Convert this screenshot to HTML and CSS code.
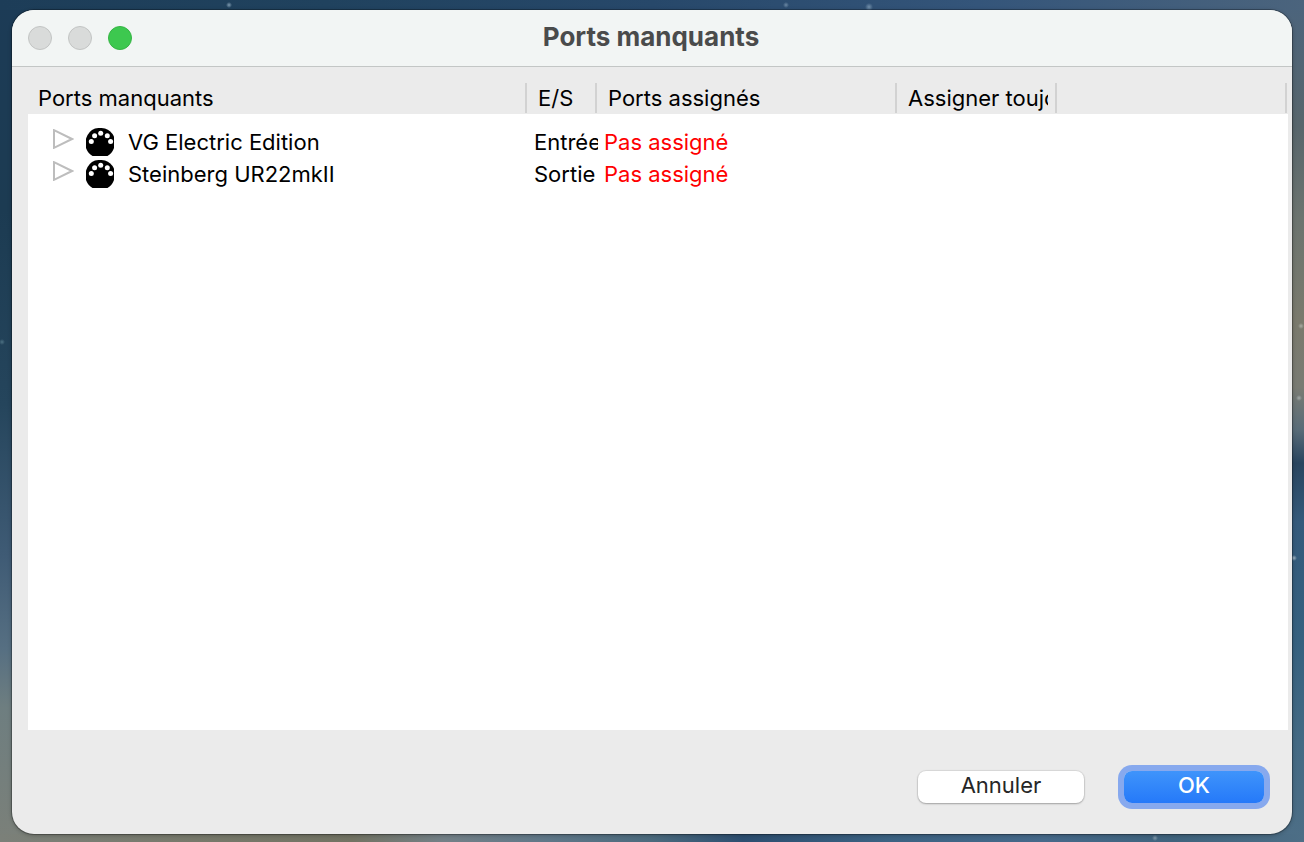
FILE: index.html
```
<!DOCTYPE html>
<html lang="fr">
<head>
<meta charset="utf-8">
<meta name="viewport" content="width=device-width, initial-scale=1">
<title>Ports manquants</title>
<link rel="stylesheet" href="styles.css">
</head>
<body class="desktop">
<svg class="defs" width="0" height="0" aria-hidden="true">
  <symbol id="arrow" viewBox="0 0 22 20">
    <path d="M2 1.2 L20 10 L2 18.8 Z" fill="none" stroke="#bdbdbd" stroke-width="2"/>
  </symbol>
  <symbol id="midi" viewBox="0 0 28 28">
    <path d="M9 0.5 Q14 -0.6 19 0.5 Q25 2.5 28 8.5 V20 Q26 25.500 21.5 28 H6.500 Q2 25.500 0 20 V10.500 Q2.500 3 9 0.500 Z" fill="#000"/>
    <g fill="#fff">
      <circle cx="5.300" cy="13.600" r="2.500"/>
      <circle cx="8.600" cy="7.800" r="2.500"/>
      <circle cx="14.700" cy="5.200" r="2.500"/>
      <circle cx="21.300" cy="7.800" r="2.500"/>
      <circle cx="24.600" cy="13.600" r="2.500"/>
    </g>
  </symbol>
</svg>
<main class="window">
  <header class="titlebar">
    <div class="lights">
      <button class="light" type="button" aria-label="Fermer" disabled></button>
      <button class="light" type="button" aria-label="Réduire" disabled></button>
      <button class="light zoom" type="button" aria-label="Agrandir"></button>
    </div>
    <h1 class="title">Ports manquants</h1>
  </header>
  <section class="list">
    <table class="ports">
      <colgroup>
        <col class="col-name"><col class="col-io"><col class="col-assigned"><col class="col-always"><col>
      </colgroup>
      <thead>
        <tr>
          <th scope="col"><div class="head">Ports manquants</div></th>
          <th scope="col"><div class="head">E/S</div></th>
          <th scope="col"><div class="head">Ports assignés</div></th>
          <th scope="col"><div class="head">Assigner toujours</div></th>
          <td><div class="head"></div></td>
        </tr>
      </thead>
      <tbody>
        <tr>
          <td><div class="port"><button class="toggle" type="button" aria-label="Développer VG Electric Edition"><svg class="arrow"><use href="#arrow"/></svg></button><svg class="midi"><use href="#midi"/></svg><span>VG Electric Edition</span></div></td>
          <td><div class="io">Entrée</div></td>
          <td class="missing">Pas assigné</td>
          <td></td><td></td>
        </tr>
        <tr>
          <td><div class="port"><button class="toggle" type="button" aria-label="Développer Steinberg UR22mkII"><svg class="arrow"><use href="#arrow"/></svg></button><svg class="midi"><use href="#midi"/></svg><span>Steinberg UR22mkII</span></div></td>
          <td><div class="io">Sortie</div></td>
          <td class="missing">Pas assigné</td>
          <td></td><td></td>
        </tr>
      </tbody>
    </table>
  </section>
  <footer class="actions">
    <button class="btn cancel" type="button">Annuler</button>
    <button class="btn ok" type="button">OK</button>
  </footer>
</main>
</body>
</html>
```
FILE: styles.css
```
* {
  box-sizing: border-box;
}

.desktop {
  margin: 0;
  min-height: 100vh;
  padding: 10px 12px 8px;
  display: flex;
  font-family: Inter, "Liberation Sans", sans-serif;
  font-size: 22px;
  line-height: 32px;
  color: #000;
  background:
    radial-gradient(circle at 229px 5px, #7f9bb0 0, transparent 3px),
    radial-gradient(circle at 786px 5px, #6b88a4 0, transparent 3px),
    radial-gradient(circle at 869px 7px, #7390ab 0, transparent 4px),
    radial-gradient(circle at 2px 342px, #4d7183 0, transparent 3px),
    radial-gradient(circle at 1301px 326px, #a9aca3 0, transparent 3px),
    radial-gradient(circle at 1299px 398px, #a3aaa8 0, transparent 3px),
    radial-gradient(circle at 1294px 558px, #9fb4c3 0, transparent 3px),
    radial-gradient(circle at 1155px 838px, #8299aa 0, transparent 3px),
    linear-gradient(90deg, #1d3d58, #20425e 25%, #27486a 50%, #34557a 75%, #4b647d) top / 100% 10px no-repeat,
    linear-gradient(90deg, #7b8079, #77796b 15%, #727363 27%, #738087 34%, #5f7788 42%, #4b6a7d 50%, #2c4e70 57%, #3b6282 68%, #46698a 80%, #3f637d 90%, #4d6e86) bottom / 100% 8px no-repeat,
    linear-gradient(#1c3b56, #1c3b52 25%, #25455c 48%, #3f5b75 66%, #566f82 77%, #6e7e80 84%, #7b8079) left / 50% 100% no-repeat,
    linear-gradient(#4b647d, #58666c 15%, #6c746f 26%, #7a7a6d 38%, #797b73 46%, #596c78 51%, #29455f 55%, #345a7b 62%, #36617f 76%, #446a84 88%, #4d6e86) right / 50% 100% no-repeat;
}

.defs {
  position: absolute;
}

.window {
  flex: 1;
  min-width: 0;
  display: flex;
  flex-direction: column;
  overflow: hidden;
  border-radius: 22px;
  background: #ebebeb;
  box-shadow: 0 0 0 1px rgba(0, 0, 0, 0.25), 0 1px 4px rgba(0, 0, 0, 0.3);
}

.titlebar {
  display: grid;
  grid-template-columns: 1fr auto 1fr;
  align-items: center;
  height: 57px;
  padding: 0 18px 0 16px;
  background: #f2f5f4;
  border-bottom: 1px solid #c3c6c5;
}

.lights {
  display: flex;
  gap: 16px;
}

.light {
  width: 24px;
  height: 24px;
  padding: 0;
  border: 1px solid #c2c4c3;
  border-radius: 50%;
  background: #d9dbda;
}

.light.zoom {
  border-color: #36b444;
  background: #3dc84f;
}

.title {
  margin: 0;
  padding-bottom: 2px;
  font-size: 26px;
  font-weight: 700;
  color: #4a4b4b;
}

.list {
  flex: 1;
  margin: 15px 4px 0 16px;
  background: linear-gradient(#ebebeb 32px, #fff 32px);
}

.ports {
  width: 100%;
  table-layout: fixed;
  border-collapse: collapse;
}

.col-name {
  width: 499px;
}

.col-io {
  width: 70px;
}

.col-assigned {
  width: 300px;
}

.col-always {
  width: 160px;
}

.ports th,
.ports td {
  padding: 0;
  font-weight: 400;
  text-align: left;
  white-space: nowrap;
}

.ports thead th,
.ports thead td {
  padding-right: 9px;
  background: linear-gradient(#d2d2d2, #d2d2d2) right 0 top 1px / 2px 30px no-repeat;
}

.ports thead td {
  background-position: right 1px top 1px;
}

.head {
  height: 32px;
  margin-left: 11px;
  overflow: hidden;
}

.ports th:first-child .head {
  margin-left: 10px;
}

.ports tbody::before {
  content: "";
  display: block;
  height: 12px;
}

.port {
  display: flex;
  align-items: center;
  height: 32px;
  padding-left: 24px;
}

.toggle {
  display: flex;
  margin-right: 12px;
  padding: 0 0 6px;
  border: 0;
  background: none;
}

.arrow {
  width: 22px;
  height: 20px;
}

.midi {
  width: 28px;
  height: 28px;
  margin-right: 14px;
}

.io {
  width: 64px;
  margin-left: 7px;
  overflow: hidden;
}

.ports .missing {
  padding-left: 7px;
  color: #ff0000;
}

.actions {
  display: flex;
  justify-content: flex-end;
  gap: 40px;
  padding: 41px 28px 31px;
}

.btn {
  height: 32px;
  padding: 0 0 4px;
  border: 0;
  border-radius: 8px;
  font: inherit;
  line-height: 28px;
}

.cancel {
  width: 166px;
  background: #fff;
  color: #262626;
  box-shadow: 0 0 1px 1px rgba(0, 0, 0, 0.08), 0 1px 2px rgba(0, 0, 0, 0.25);
}

.ok {
  width: 140px;
  font-weight: 500;
  color: #fff;
  background: linear-gradient(#3f94fb, #2579f9);
  box-shadow: 0 0 0 6px #87a9ee;
}
```
